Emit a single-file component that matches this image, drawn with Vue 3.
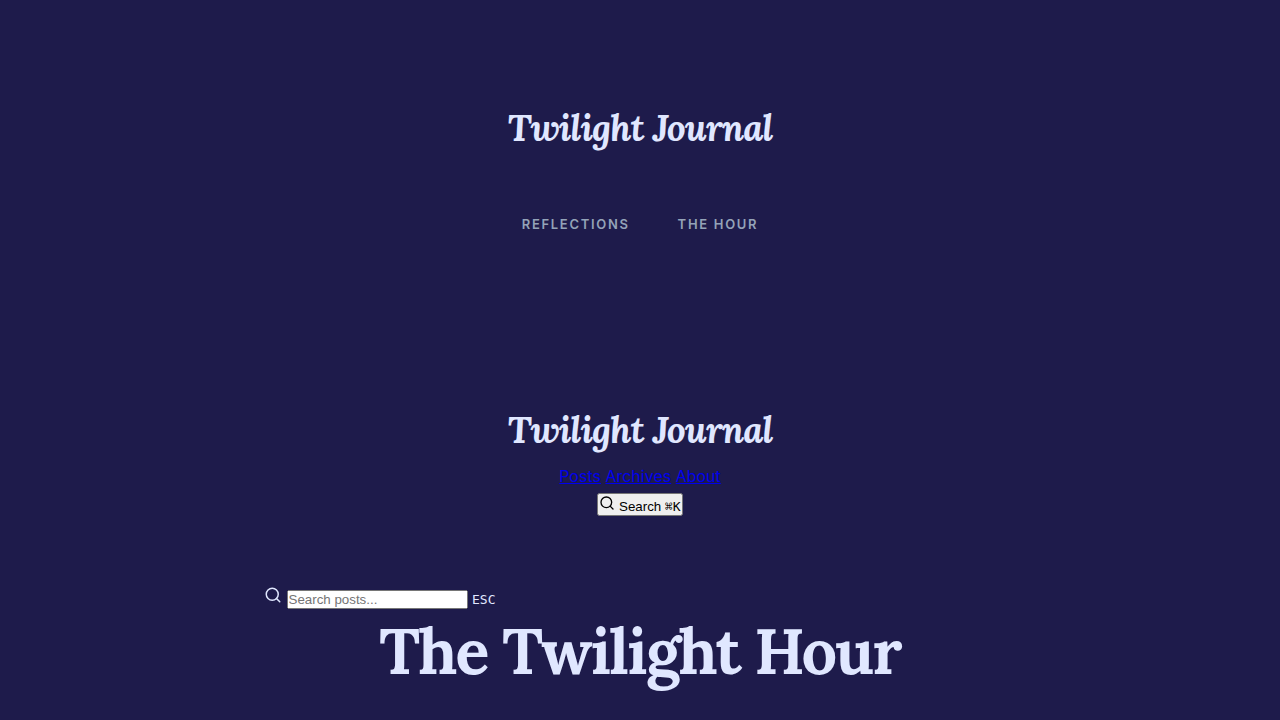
<script setup>
const navLinks = ['Reflections', 'The Hour']
const pageLinks = ['Posts', 'Archives', 'About']
</script>

<template>
  <div class="page">
    <header class="masthead">
      <a class="brand" href="#">Twilight Journal</a>
      <nav class="topics">
        <a v-for="link in navLinks" :key="link" href="#">{{ link }}</a>
      </nav>
    </header>

    <header class="toolbar">
      <a class="brand" href="#">Twilight Journal</a>
      <nav class="pages">
        <template v-for="link in pageLinks" :key="link"><a href="#">{{ link }}</a>{{ ' ' }}</template>
      </nav>
      <button type="button">
        <svg width="16" height="16" viewBox="0 0 24 24" fill="none" stroke="currentColor" stroke-width="2" stroke-linecap="round" stroke-linejoin="round" aria-hidden="true">
          <circle cx="11" cy="11" r="8" /><path d="m21 21-4.35-4.35" />
        </svg>
        Search <kbd>⌘K</kbd>
      </button>
    </header>

    <main class="content">
      <div class="search-row">
        <svg width="18" height="18" viewBox="0 0 24 24" fill="none" stroke="currentColor" stroke-width="2" stroke-linecap="round" stroke-linejoin="round" aria-hidden="true">
          <circle cx="11" cy="11" r="8" /><path d="m21 21-4.35-4.35" />
        </svg>
        {{ ' ' }}<input type="text" placeholder="Search posts..." aria-label="Search posts">
        {{ ' ' }}<kbd>ESC</kbd>
      </div>
      <h1>The Twilight Hour</h1>
    </main>
  </div>
</template>

<style>
body {
  margin: 0;
  background: #1e1b4b;
}
</style>

<style scoped>
.page {
  max-width: 752px;
  margin: 0 auto;
  padding: 96px 24px 24px;
  color: #e0e7ff;
  font-family: Inter, "Liberation Sans", sans-serif;
  font-size: 16px;
  line-height: 29px;
}

.masthead,
.toolbar {
  display: flex;
  flex-direction: column;
  align-items: center;
}

.brand {
  color: #e0e7ff;
  font-family: Lora, "Liberation Serif", serif;
  font-size: 37px;
  font-style: italic;
  font-weight: 700;
  line-height: 64px;
  letter-spacing: -0.03em;
  text-decoration: none;
}

.topics {
  display: flex;
  gap: 48px;
  margin-top: 48px;
}

.topics a {
  color: #94a3b8;
  font-size: 13px;
  font-weight: 600;
  letter-spacing: 0.13em;
  line-height: 32px;
  text-decoration: none;
  text-transform: uppercase;
}

.toolbar {
  margin-top: 158px;
}

.pages a {
  color: #0000ee;
}

button,
input {
  padding: 0;
  font-family: "Liberation Sans", Arial, sans-serif;
}

button {
  margin-top: 2px;
}

kbd {
  font-family: "DejaVu Sans Mono", monospace;
  font-size: 13px;
}

.content {
  margin-top: 68px;
}

h1 {
  margin: 0;
  font-family: Lora, "Liberation Serif", serif;
  font-size: 63px;
  font-weight: 700;
  letter-spacing: -0.03em;
  line-height: 74px;
  text-align: center;
}
</style>
